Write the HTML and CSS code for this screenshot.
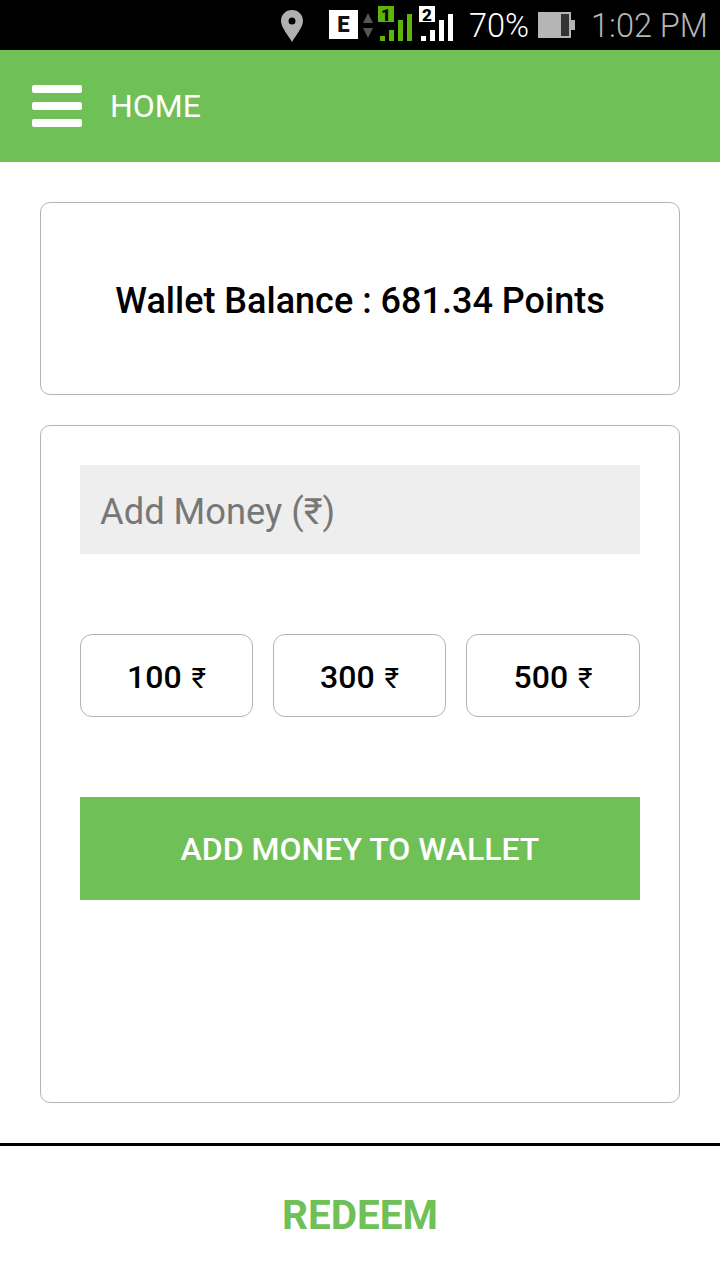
FILE: index.html
```
<!DOCTYPE html>
<html lang="en">
<head>
<meta charset="utf-8">
<title>Wallet</title>
<link rel="stylesheet" href="styles.css">
</head>
<body>
<div class="status">
  <svg class="pin" width="24" height="34" viewBox="0 0 24 34"><path fill="#b0b0b0" fill-rule="evenodd" d="M12 1C5.6 1 1 5.8 1 11.8 1 18.5 8 26 12 33c4-7 11-14.500 11-21.200C23 5.800 18.400 1 12 1zm0 7.500a3.500 3.500 0 1 1 0 7 3.500 3.500 0 0 1 0-7z"/></svg>
  <span class="ebox">E</span>
  <svg class="arrows" width="12" height="28" viewBox="0 0 12 28"><path fill="#555" d="M6 1l5 10H1zM1 16h10l-5 10z"/></svg>
  <svg class="sim" width="34" height="36" viewBox="0 0 34 36"><rect x="0" y="0" width="16" height="16" fill="#5fb40c"/><text x="8" y="14.500" class="simnum simnum-dark">1</text><g fill="#5fb40c"><rect x="2" y="30" width="5" height="5"/><rect x="11" y="24" width="5" height="11"/><rect x="20" y="14" width="5" height="21"/><rect x="29" y="8" width="5" height="27"/></g></svg>
  <svg class="sim sim2" width="34" height="36" viewBox="0 0 34 36"><rect x="0" y="0" width="16" height="16" fill="#fff"/><text x="8" y="14.500" class="simnum simnum-dark">2</text><g fill="#fff"><rect x="2" y="30" width="5" height="5"/><rect x="11" y="24" width="5" height="11"/><rect x="20" y="14" width="5" height="21"/><rect x="29" y="8" width="5" height="27"/></g></svg>
  <span class="pct">70%</span>
  <svg class="batt" width="38" height="28" viewBox="0 0 38 28"><rect x="0" y="1" width="33" height="26" fill="#b5b5b5"/><rect x="23" y="3" width="8" height="22" fill="#333"/><rect x="33" y="9" width="4" height="10" fill="#b5b5b5"/></svg>
  <span class="time">1:02 PM</span>
</div>
<header class="appbar">
  <div class="burger"><i></i><i></i><i></i></div>
  <span class="apptitle">HOME</span>
</header>
<main class="content">
  <section class="card balance">Wallet Balance : 681.34 Points</section>
  <section class="card wallet">
    <div class="input">Add Money (₹)</div>
    <div class="chips">
      <button class="chip">100 <span class="rs">₹</span></button>
      <button class="chip">300 <span class="rs">₹</span></button>
      <button class="chip">500 <span class="rs">₹</span></button>
    </div>
    <button class="add">ADD MONEY TO WALLET</button>
  </section>
</main>
<footer class="redeem">REDEEM</footer>
</body>
</html>
```
FILE: styles.css
```
* { box-sizing: border-box; }
html, body { margin: 0; padding: 0; }
body {
  width: 720px;
  height: 1280px;
  background: #fff;
  font-family: Roboto, "Noto Sans", sans-serif;
  color: #000;
  overflow: hidden;
  display: flex;
  flex-direction: column;
}
.status {
  height: 50px;
  background: #000;
  display: flex;
  align-items: center;
  justify-content: flex-end;
  padding-right: 12px;
  flex: none;
}
.pin { margin-right: 25px; margin-top: 1px; }
.ebox {
  width: 29px; height: 29px;
  background: #fff; color: #111;
  font: 900 22px/29px Roboto, sans-serif;
  text-align: center;
  margin-right: 4px;
  margin-top: -1px;
}
.arrows { margin-right: 4px; margin-top: 1px; }
.sim { margin-right: 7px; margin-top: -3px; }
.sim2 { margin-right: 16px; }
.simnum { font: 900 17px Roboto, sans-serif; text-anchor: middle; }
.simnum-dark { fill: #000; }
.pct { color: #fff; font-size: 32.500px; font-weight: 300; margin-right: 9px; padding-top: 2px; }
.batt { margin-right: 15px; }
.time { color: #b5b5b5; font-size: 32.500px; font-weight: 300; padding-top: 2px; }
.appbar {
  height: 112px;
  background: #6fc056;
  display: flex;
  align-items: center;
  padding-left: 32px;
  flex: none;
}
.burger { width: 50px; display: flex; flex-direction: column; gap: 9px; margin-right: 28px; }
.burger i { display: block; height: 8px; background: #fff; border-radius: 2px; }
.apptitle { color: #fff; font-size: 32px; }
.content {
  flex: 1;
  padding: 40px 40px 40px;
  display: flex;
  flex-direction: column;
  gap: 30px;
  min-height: 0;
}
.card { border: 1px solid #b4b4b4; border-radius: 10px; background: #fff; }
.balance {
  height: 193px;
  display: flex;
  align-items: center;
  justify-content: center;
  padding-top: 5px;
  font-size: 36px;
  font-weight: 500;
}
.wallet { flex: 1; padding: 39px 39px 0; }
.input {
  height: 89px;
  background: #eee;
  color: #777;
  font-size: 36.300px;
  padding-left: 20px;
  line-height: 94px;
}
.chips { display: grid; grid-template-columns: 173px 173px 174px; gap: 20px; margin-top: 80px; }
.chip {
  height: 83px;
  border: 1px solid #b0b4ba;
  border-radius: 12px;
  background: #fff;
  font: 500 32px Roboto, sans-serif;
  color: #000;
  padding: 2px 0 0;
}
.rs { font-size: 28px; font-weight: 400; margin-left: 2px; }
.add {
  display: block;
  width: 100%;
  height: 103px;
  margin-top: 80px;
  border: 0;
  background: #6fc056;
  color: #fff;
  font: 500 32px Roboto, sans-serif;
  padding: 0;
}
.redeem {
  height: 137px;
  flex: none;
  border-top: 3px solid #000;
  display: flex;
  align-items: center;
  justify-content: center;
  padding-top: 4px;
  color: #6fc056;
  font-size: 40.500px;
  font-weight: 700;
}
```
